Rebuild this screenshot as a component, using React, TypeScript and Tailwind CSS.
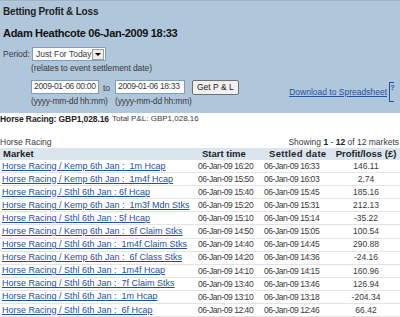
const rows = [
  ["Horse Racing / Kemp 6th Jan :  1m Hcap", "06-Jan-09 16:20", "06-Jan-09 16:33", "146.11"],
  ["Horse Racing / Kemp 6th Jan :  1m4f Hcap", "06-Jan-09 15:50", "06-Jan-09 16:03", "2.74"],
  ["Horse Racing / Sthl 6th Jan : 6f Hcap", "06-Jan-09 15:40", "06-Jan-09 15:45", "185.16"],
  ["Horse Racing / Kemp 6th Jan :  1m3f Mdn Stks", "06-Jan-09 15:20", "06-Jan-09 15:31", "212.13"],
  ["Horse Racing / Sthl 6th Jan : 5f Hcap", "06-Jan-09 15:10", "06-Jan-09 15:14", "-35.22"],
  ["Horse Racing / Kemp 6th Jan :  6f Claim Stks", "06-Jan-09 14:50", "06-Jan-09 15:05", "100.54"],
  ["Horse Racing / Sthl 6th Jan :  1m4f Claim Stks", "06-Jan-09 14:40", "06-Jan-09 14:45", "290.88"],
  ["Horse Racing / Kemp 6th Jan :  6f Class Stks", "06-Jan-09 14:20", "06-Jan-09 14:36", "-24.16"],
  ["Horse Racing / Sthl 6th Jan :  1m4f Hcap", "06-Jan-09 14:10", "06-Jan-09 14:15", "160.96"],
  ["Horse Racing / Sthl 6th Jan :  7f Claim Stks", "06-Jan-09 13:40", "06-Jan-09 13:46", "126.94"],
  ["Horse Racing / Sthl 6th Jan :  1m Hcap", "06-Jan-09 13:10", "06-Jan-09 13:18", "-204.34"],
  ["Horse Racing / Sthl 6th Jan :  6f Hcap", "06-Jan-09 12:40", "06-Jan-09 12:46", "66.42"],
];

export default function App() {
  return (
    <div className="w-[400px] h-[317px] overflow-hidden bg-white text-[#3a3a3a] text-[8.5px] leading-none whitespace-nowrap font-['Liberation_Sans',sans-serif]">
      <div className="bg-[#b0c7db] border-t border-[#9fb4c6] h-[113px] pt-[6px]">
        <div className="pl-[3px] font-bold text-[10px] text-[#222] tracking-[-0.2px]">Betting Profit &amp; Loss</div>
        <div className="pl-[3px] mt-[11px] font-bold text-[11px] text-[#111] tracking-[-0.3px]">Adam Heathcote 06-Jan-2009 18:33</div>

        <div className="flex items-center mt-[8px] pl-[3px]">
          <span className="w-[29px]">Period:</span>
          <div className="flex items-center h-[14px] w-[74px] bg-white border border-[#7f9db9] pl-[3px]">
            <span className="flex-1">Just For Today</span>
            <span className="w-[12px] h-[11px] mr-px bg-[#ececec] border border-[#a0a0a0] flex items-center justify-center">
              <span className="border-x-[3px] border-t-[3px] border-x-transparent border-t-black" />
            </span>
          </div>
        </div>
        <div className="pl-[31px] mt-[3px] tracking-[-0.1px]">(relates to event settlement date)</div>

        <div className="flex items-start mt-[7px] pr-[5px]">
          <div className="ml-[31px] w-[68px] flex flex-col">
            <div className="w-[68px] h-[14px] bg-white border border-[#7f9db9] flex items-center pl-[2px] tracking-[-0.35px]">2009-01-06 00:00</div>
            <div className="mt-[3px] tracking-[-0.2px]">(yyyy-mm-dd hh:mm)</div>
          </div>
          <span className="ml-[4px] mt-[4px] w-[12px]">to</span>
          <div className="w-[70px] flex flex-col">
            <div className="w-[70px] h-[14px] bg-white border border-[#7f9db9] flex items-center pl-[2px] tracking-[-0.35px]">2009-01-06 18:33</div>
            <div className="mt-[3px] tracking-[-0.2px]">(yyyy-mm-dd hh:mm)</div>
          </div>
          <div className="ml-[7px] h-[15px] px-[4px] bg-[#f0f0f0] border border-[#707070] rounded-[2px] flex items-center text-[#222]">Get P &amp; L</div>
          <div className="flex-1 flex justify-end items-center mt-[2px]">
            <span className="underline text-[#2550a0] mt-[2px]">Download to Spreadsheet</span>
            <span className="ml-[2px] relative w-[6px] h-[20px] border-l border-[#2550a0] flex justify-center">
              <span className="absolute top-0 left-0 w-[4px] border-t border-[#2550a0]" />
              <span className="absolute bottom-0 left-0 w-[4px] border-t border-[#2550a0]" />
              <span className="text-[7px] font-bold text-[#2550a0] mt-[2px]">?</span>
            </span>
          </div>
        </div>
      </div>

      <div className="flex items-center mt-[2px]">
        <span className="font-bold text-[8.5px] tracking-[-0.1px] text-[#222]">Horse Racing: GBP1,028.16</span>
        <span className="ml-[3px] text-[8px]">Total P&amp;L: GBP1,028.16</span>
      </div>

      <div className="flex justify-between items-end mt-[14px] pr-[1px]">
        <span className="text-[8.5px]">Horse Racing</span>
        <span>
          Showing <b className="text-[#222]">1</b> - <b className="text-[#222]">12</b> of 12 markets
        </span>
      </div>

      <div className="flex items-center h-[12px] mt-[2px] bg-[#dbe5ee] font-bold text-[9.5px] text-[#222]">
        <span className="w-[198px] pl-[3px]">Market</span>
        <span className="w-[66px] pl-[4px]">Start time</span>
        <span className="w-[68px] pl-[5px] tracking-[0.3px]">Settled date</span>
        <span className="flex-1 text-center">Profit/loss (£)</span>
      </div>

      {rows.map((r, i) => (
        <div key={i} className="flex items-center h-[13.1px] border-b border-[#e4e4e4]">
          <span className="w-[198px] pl-[2px] text-[9px] underline text-[#2550a0] whitespace-pre">{r[0]}</span>
          <span className="w-[66px] tracking-[-0.45px]">{r[1]}</span>
          <span className="w-[68px] tracking-[-0.45px]">{r[2]}</span>
          <span className="flex-1 text-center">{r[3]}</span>
        </div>
      ))}
    </div>
  );
}
